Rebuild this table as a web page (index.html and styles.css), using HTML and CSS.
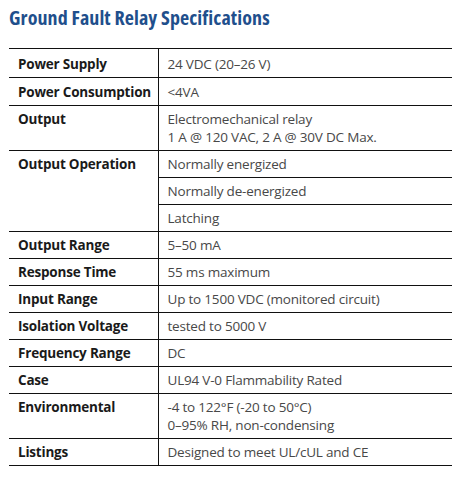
FILE: index.html
```html
<!DOCTYPE html>
<html>
    <link rel="stylesheet" href="styles.css">
    <head>
        <title>Ground Fault Relay Specifications</title>
    </head>
    <body>
        <div class="sheet">
            <h1 class="sheet__title">Ground Fault Relay Specifications</h1>

            <table class="specs">
                <tr class="specs__row--first">
                    <td class="specs__label">Power Supply</td>
                    <td class="specs__value">24 VDC (20–26 V)</td>
                </tr>
                <tr class="specs__row--second">
                    <td class="specs__label">Power Consumption</td>
                    <td class="specs__value">&lt;4VA</td>
                </tr>
                <tr>
                    <td class="specs__label">Output</td>
                    <td class="specs__value">Electromechanical relay<br>1 A @ 120 VAC, 2 A @ 30V DC Max.</td>
                </tr>
                <tr>
                    <td class="specs__label" rowspan="3">Output Operation</td>
                    <td class="specs__value">Normally energized</td>
                </tr>
                <tr>
                    <td class="specs__value">Normally de-energized</td>
                </tr>
                <tr>
                    <td class="specs__value">Latching</td>
                </tr>
                <tr>
                    <td class="specs__label">Output Range</td>
                    <td class="specs__value">5–50 mA</td>
                </tr>
                <tr>
                    <td class="specs__label">Response Time</td>
                    <td class="specs__value">55 ms maximum</td>
                </tr>
                <tr>
                    <td class="specs__label">Input Range</td>
                    <td class="specs__value">Up to 1500 VDC (monitored circuit)</td>
                </tr>
                <tr>
                    <td class="specs__label">Isolation Voltage</td>
                    <td class="specs__value">tested to 5000 V</td>
                </tr>
                <tr>
                    <td class="specs__label">Frequency Range</td>
                    <td class="specs__value">DC</td>
                </tr>
                <tr>
                    <td class="specs__label">Case</td>
                    <td class="specs__value">UL94 V-0 Flammability Rated</td>
                </tr>
                <tr>
                    <td class="specs__label">Environmental</td>
                    <td class="specs__value">-4 to 122°F (-20 to 50°C)<br>0–95% RH, non-condensing</td>
                </tr>
                <tr>
                    <td class="specs__label">Listings</td>
                    <td class="specs__value">Designed to meet UL/cUL and CE</td>
                </tr>
            </table>
        </div>
    </body>
</html>
```

FILE: styles.css
```css
body{
    margin: 0;
    background: #fff;
    font-family: "Open Sans", "Noto Sans", sans-serif;
}
.sheet{
    padding: 5px 15px 0 9px;
}
.sheet__title{
    margin: 0 0 18px 0;
    font-size: 20px;
    line-height: 25px;
    font-weight: 700;
    font-stretch: 75%;
    color: #1f4f8c;
    letter-spacing: 0.1px;
}
.specs{
    width: 443px;
    table-layout: fixed;
    border-collapse: collapse;
}
.specs td{
    border-top: 1px solid #111;
    border-bottom: 1px solid #111;
    padding: 4px 8px 4px 9px;
    line-height: 18px;
    font-size: 13.5px;
    vertical-align: top;
}
.specs__row--first td{
    padding-top: 6px;
}
.specs__row--second td{
    padding-top: 5px;
}
.specs td.specs__label{
    width: 149px;
    box-sizing: border-box;
    padding-right: 4px;
    border-right: 1px solid #111;
    white-space: nowrap;
    font-weight: 700;
    color: #1a1a1a;
    letter-spacing: -0.2px;
}
.specs__value{
    color: #484848;
    letter-spacing: -0.2px;
}
```
